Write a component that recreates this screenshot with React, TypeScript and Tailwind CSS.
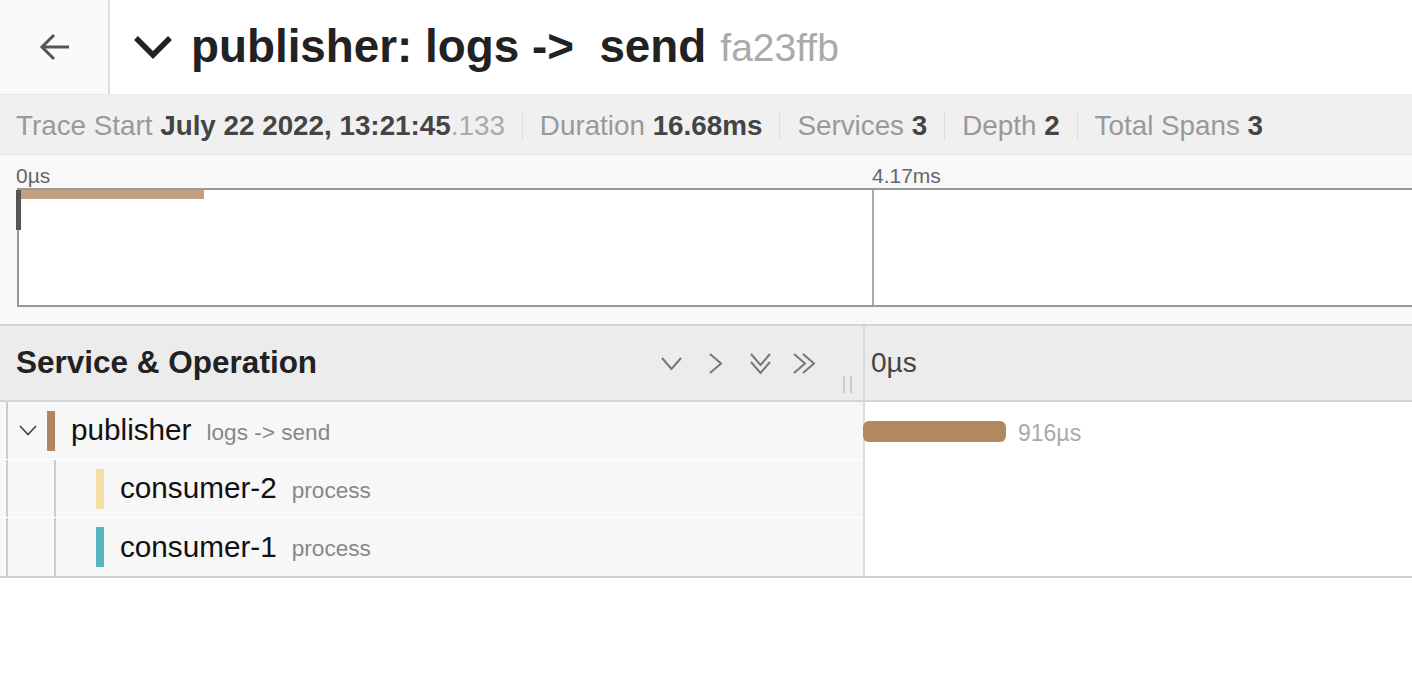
import React from 'react'

const font = { fontFamily: '"Liberation Sans", Arial, Helvetica, sans-serif' }

function BackArrow() {
  return (
    <svg width="32" height="28" viewBox="0 0 32 28" fill="none" stroke="#555" strokeWidth="3">
      <path d="M30 14H3" />
      <path d="M15 2L3 14l12 12" />
    </svg>
  )
}

function TitleChevron() {
  return (
    <svg width="40" height="26" viewBox="0 0 40 26" fill="none" stroke="#222" strokeWidth="5.5" strokeLinejoin="miter">
      <path d="M3 4l17 17L37 4" />
    </svg>
  )
}

function Chevron({ dir, double }: { dir: 'down' | 'right'; double?: boolean }) {
  if (dir === 'down') {
    return (
      <svg width="21" height={double ? 22 : 14} viewBox={double ? '0 0 21 22' : '0 0 21 14'} fill="none" stroke="#777" strokeWidth="2">
        <path d="M1 1l9.5 11L20 1" />
        {double && <path d="M1 9l9.5 11L20 9" />}
      </svg>
    )
  }
  return (
    <svg width={double ? 23 : 14} height="21" viewBox={double ? '0 0 23 21' : '0 0 14 21'} fill="none" stroke="#777" strokeWidth="2">
      <path d="M1 1l11 9.5L1 20" />
      {double && <path d="M10 1l11 9.5L10 20" />}
    </svg>
  )
}

function Stat({ label, value, extra }: { label: string; value: string; extra?: string }) {
  return (
    <span className="whitespace-nowrap">
      <span className="text-[#999]">{label} </span>
      <span className="font-bold text-[#444]">{value}</span>
      {extra && <span className="text-[#aaa]">{extra}</span>}
    </span>
  )
}

function Sep() {
  return <span className="mx-[17px] h-[28px] w-px bg-[#ddd]" />
}

const spans = [
  { service: 'publisher', op: 'logs -> send', color: 'bg-[#b1855f]', depth: 0, toggle: true },
  { service: 'consumer-2', op: 'process', color: 'bg-[#f6dfa6]', depth: 1, toggle: false },
  { service: 'consumer-1', op: 'process', color: 'bg-[#56b6bf]', depth: 1, toggle: false },
]

export default function App() {
  return (
    <div className="w-[1412px] h-[676px] overflow-hidden bg-white" style={font}>
      {/* Title bar */}
      <div className="flex h-[95px] border-b border-[#e8e8e8]">
        <div className="flex w-[110px] items-center justify-center border-r-2 border-[#dedede] bg-[#fafafa] pl-[2px]">
          <BackArrow />
        </div>
        <div className="flex items-center pl-[23px]">
          <TitleChevron />
          <h1 className="ml-[18px] whitespace-pre text-[45.8px] font-bold leading-none text-[#222]">publisher: logs -&gt;  send</h1>
          <span className="ml-[14px] text-[39px] leading-none text-[#aaa]">fa23ffb</span>
        </div>
      </div>

      {/* Trace stats */}
      <div className="flex h-[60px] items-center border-b border-[#e4e4e4] bg-[#f0f0f0] px-[16px] pt-[2px] text-[27.8px] leading-none">
        <Stat label="Trace Start" value="July 22 2022, 13:21:45" extra=".133" />
        <Sep />
        <Stat label="Duration" value="16.68ms" />
        <Sep />
        <Stat label="Services" value="3" />
        <Sep />
        <Stat label="Depth" value="2" />
        <Sep />
        <Stat label="Total Spans" value="3" />
      </div>

      {/* Minimap */}
      <div className="h-[171px] border-b-2 border-[#d4d4d4] bg-[#f8f8f8] pt-[7px]">
        <div className="flex h-[26px] items-center pl-[16px] text-[21px] leading-none text-[#666]">
          <span className="w-[856px]">0µs</span>
          <span>4.17ms</span>
        </div>
        <div className="relative ml-[17px] flex h-[119px] border-y-2 border-l-2 border-[#999] bg-white">
          <div className="w-[855px] border-r-2 border-[#aaa] pl-[1px]">
            <div className="h-[9px] w-[184px] bg-[#c29f80]" />
          </div>
          <div className="absolute -left-[3px] top-0 h-[40px] w-[5px] bg-[#555]" />
        </div>
      </div>

      {/* Column header */}
      <div className="flex h-[76px] border-b-2 border-[#d4d4d4] bg-[#ececec]">
        <div className="flex w-[865px] items-center border-r-2 border-[#d8d8d8] pl-[16px]">
          <span className="text-[31.5px] font-bold text-[#222]">Service &amp; Operation</span>
          <div className="ml-auto flex items-center">
            <span className="mt-[2px]"><Chevron dir="down" /></span>
            <span className="ml-[27px]"><Chevron dir="right" /></span>
            <span className="ml-[27px] mt-[2px]"><Chevron dir="down" double /></span>
            <span className="ml-[22px]"><Chevron dir="right" double /></span>
          </div>
          <div className="ml-[27px] mr-[11px] flex gap-[5px] self-end pb-[7px]">
            <span className="h-[17px] w-[2px] bg-[#ccc]" />
            <span className="h-[17px] w-[2px] bg-[#ccc]" />
          </div>
        </div>
        <div className="flex items-center pl-[6px] text-[28px] text-[#444]">0µs</div>
      </div>

      {/* Span rows */}
      <div className="border-b-2 border-[#cfcfcf]">
        {spans.map((s, i) => (
          <div key={s.service} className="flex h-[58px]">
            <div className={`flex w-[865px] border-r-2 border-[#dcdcdc] bg-[#f7f7f7] ${i < spans.length - 1 ? 'border-b border-b-white' : ''}`}>
              <div className="ml-[6px] w-[2px] bg-[#ccc]" />
              {s.depth > 0 && <div className="w-[48px] border-r-2 border-[#ccc]" />}
              <div className={`flex items-center justify-center ${s.depth > 0 ? 'w-[40px]' : 'w-[39px]'}`}>
                {s.toggle && (
                  <svg width="18" height="11" viewBox="0 0 18 11" fill="none" stroke="#444" strokeWidth="1.6">
                    <path d="M1 1l8 8.5L17 1" />
                  </svg>
                )}
              </div>
              <div className="flex items-center">
                <div className={`h-[40px] w-[8px] ${s.color}`} />
              </div>
              <div className="ml-[16px] flex items-center whitespace-nowrap">
                <span className="text-[29.7px] text-[#111]">{s.service}</span>
                <span className="ml-[15px] mt-[4px] text-[22.6px] text-[#888]">{s.op}</span>
              </div>
            </div>
            <div className="flex flex-1 items-center">
              {i === 0 && (
                <>
                  <div className="-ml-[2px] h-[21px] w-[143px] rounded-[6px] bg-[#b1885f]" />
                  <span className="ml-[12px] mt-[4px] text-[23px] text-[#aaa]">916µs</span>
                </>
              )}
            </div>
          </div>
        ))}
      </div>
    </div>
  )
}
